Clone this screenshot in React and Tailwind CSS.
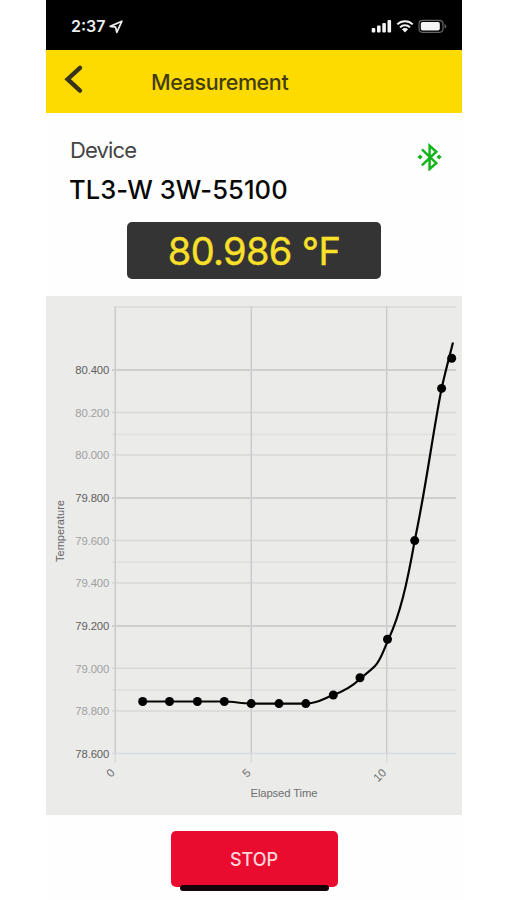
const gridLines = [
  { y: 307, color: '#d9d9d9', w: 1.3, from: 114 },
  { y: 370, label: '80.400', major: true },
  { y: 412.5, label: '80.200' },
  { y: 434.5, minor: true },
  { y: 455, label: '80.000' },
  { y: 498, label: '79.800', major: true },
  { y: 540.5, label: '79.600' },
  { y: 562.3, minor: true },
  { y: 583, label: '79.400' },
  { y: 626, label: '79.200', major: true },
  { y: 668.3, label: '79.000' },
  { y: 689.7, minor: true },
  { y: 711, label: '78.800' },
  { y: 753.5, label: '78.600', axis: true },
];

const ticks = [
  { x: 115.2, label: '0', tx: 115.5 },
  { x: 251.3, label: '5', tx: 251.5 },
  { x: 386.7, label: '10', tx: 387 },
];

const points = [
  [142.7, 701.5], [169.5, 701.5], [197.4, 701.5], [224.3, 701.5],
  [251.2, 703.6], [279, 703.6], [305.8, 703.6], [333.3, 695],
  [360, 677.8], [387.5, 639.2], [414.7, 540.6], [441.6, 388.4], [451.7, 358.3],
];

function lineColor(line) {
  if (line.color) return line.color;
  if (line.axis) return '#d5dade';
  if (line.major) return '#cfcfcf';
  return line.minor ? '#dedede' : '#d8d8d8';
}

function Chart() {
  return (
    <svg className="block h-[519px] w-full bg-[#ebebea]" viewBox="46 296 416 519" fontFamily="'Liberation Sans', Arial, sans-serif">
      {gridLines.map((l) => (
        <line key={l.y} x1={l.from || 112} x2="456" y1={l.y} y2={l.y} stroke={lineColor(l)} strokeWidth={l.major ? 1.8 : l.w || 1.4} />
      ))}
      {ticks.map((t) => (
        <g key={t.label}>
          <line x1={t.x} x2={t.x} y1="307" y2="753" stroke="#cbcbcc" strokeWidth="1.5" />
          <line x1={t.x} x2={t.x} y1="753" y2="763" stroke="#d5dade" strokeWidth="1.4" />
          <text x={t.tx} y="773.5" textAnchor="end" fontSize="11.5" fill="#707070" transform={`rotate(-45 ${t.tx} 773.5)`}>{t.label}</text>
        </g>
      ))}
      {gridLines.filter((l) => l.label).map((l) => (
        <text key={l.label} x="75.3" y={l.y + 4.4} fontSize="11.3" textLength="34" fill={l.major || l.axis ? '#606060' : '#a0a0a0'}>{l.label}</text>
      ))}
      <text x="64" y="562" fontSize="11" textLength="62" fill="#666" transform="rotate(-90 64 562)">Temperature</text>
      <text x="250.5" y="796.5" fontSize="11.3" textLength="67" fill="#707070">Elapsed Time</text>
      <path
        d="M142.7 701.5H224.3C234 701.5 241 703.6 251.2 703.6H305.8C317 703.6 323 699 333.3 695C343 691.5 351 687.5 360 679C364 675 368 673 375 666C381 660 384 649 388.5 639.2C400 615 407 584 414.7 540.6C426 487 432 438 441.6 388.4C445 373 449 358 453 342.5"
        fill="none" stroke="#050505" strokeWidth="2.2"
      />
      {points.map(([x, y]) => <circle key={x} cx={x} cy={y} r="4.5" fill="#000" />)}
    </svg>
  );
}

function StatusBar() {
  return (
    <div className="flex h-[50px] items-start justify-between bg-black pl-[25px] pr-[15px] pt-[17px] text-white">
      <div className="flex items-center gap-1">
        <span className="text-[16px] font-semibold leading-[19px] text-[#eee]">2:37</span>
        <svg className="size-[14px]" viewBox="0 0 14 14" fill="none" stroke="#eee" strokeWidth="1.7" strokeLinejoin="round">
          <path d="M12.9 1.2 1.2 6.4 6.6 7.2 7.8 12.4Z" />
        </svg>
      </div>
      <svg className="h-[19px] w-[77px]" viewBox="370 17 77 19">
        <g fill="#f4f4f4">
          <rect x="371.7" y="28" width="3.6" height="4.4" rx="1" />
          <rect x="377" y="25.6" width="3.6" height="6.8" rx="1" />
          <rect x="382.3" y="23" width="3.6" height="9.4" rx="1" />
          <rect x="387.5" y="20" width="3.6" height="12.4" rx="1" />
          <path d="M405 32.5 401.9 29.3A4.4 4.4 0 0 1 408.1 29.3Z" />
          <rect x="420.8" y="22" width="19" height="8.5" rx="1.8" />
        </g>
        <g fill="none" stroke="#f4f4f4" strokeWidth="2">
          <path d="M397.3 24.4A11 11 0 0 1 412.7 24.4M400 27.4A7 7 0 0 1 410 27.4" />
        </g>
        <rect x="419" y="20.3" width="24" height="12" rx="3.5" fill="none" stroke="#666" strokeWidth="1.2" />
        <path d="M444.6 24v4.6q1.8-.7 1.8-2.3t-1.8-2.3Z" fill="#666" />
      </svg>
    </div>
  );
}

export default function App() {
  return (
    <div className="h-[900px] w-[507px] overflow-hidden bg-white pl-[46px] font-['Inter',sans-serif]">
      <div className="flex h-full w-[416px] flex-col bg-[#fefefe]">
        <StatusBar />
        <header className="flex h-[63px] items-center bg-[#fddb00] pl-[18px]">
          <svg className="mb-[5px] h-[30px] w-[20px]" viewBox="0 0 20 30" fill="none" stroke="#38341a" strokeWidth="4.4" strokeLinecap="round">
            <path d="M16 3.8 3.6 15.2 16 26.6" />
          </svg>
          <h1 className="ml-[67px] text-[21.5px] font-medium leading-[28px] tracking-[-0.4px] text-[#423c10]">Measurement</h1>
        </header>
        <section className="flex h-[183px] flex-col px-6">
          <div className="flex items-start justify-between pt-[23px]">
            <p className="text-[22px] leading-[28px] tracking-[-0.85px] text-[#444]">Device</p>
            <svg className="mr-[-6px] mt-[7px] size-[28px]" viewBox="0 0 28 28" fill="none" stroke="#14b51c" strokeWidth="2.5">
              <path d="M5.9 6.3 20.3 20.1 13.6 26V2.7L20.3 8.7 5.9 22.3" />
              <path d="M4.1 11.4 6.7 14 4.1 16.6 1.5 14ZM23.1 11.4 25.7 14 23.1 16.6 20.5 14Z" fill="#14b51c" stroke="none" />
            </svg>
          </div>
          <p className="ml-[-1px] mt-[2px] whitespace-nowrap text-[25.5px] font-medium leading-[34px] tracking-[0.1px] text-[#080808]">TL3-W 3W-55100</p>
          <div className="ml-[57px] mt-[15px] flex h-[57px] w-[254px] items-center justify-center rounded-[5px] bg-[#343434] pt-[2px] text-[38px] tracking-[-0.65px] text-[#fbe02a] [-webkit-text-stroke:0.4px_#fbe02a]">80.986 °F</div>
        </section>
        <Chart />
        <footer className="flex flex-col items-center pt-[16px]">
          <button className="flex h-[56px] w-[167px] items-center justify-center rounded-[5px] bg-[#e90c2e] text-[18px] font-medium text-[#ffd5dc]">STOP</button>
          <div className="-mt-[2px] h-[6px] w-[149px] rounded-full bg-[#160508]" />
        </footer>
      </div>
    </div>
  );
}
